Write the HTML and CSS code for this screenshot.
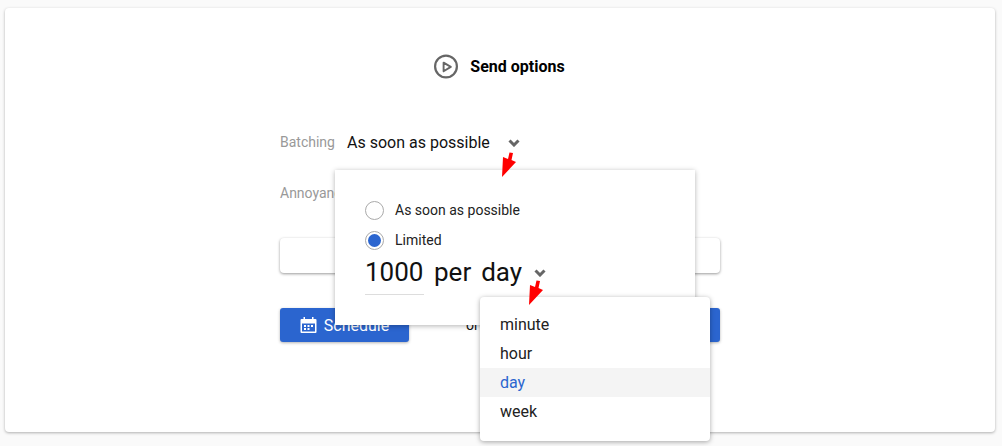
FILE: index.html
```html
<!DOCTYPE html>
<html lang="en">
  <head>
    <meta charset="UTF-8" />
    <title>Send options</title>
    <link rel="stylesheet" href="styles.css">
  </head>
  <body>
    <div class="card">
      <h2 class="title">
        <svg class="title-icon" width="26" height="26" viewBox="0 0 26 26">
          <circle cx="13" cy="13.5" r="10.9" fill="none" stroke="#666" stroke-width="2.2" />
          <path d="M10.6 9.6 L17.8 13.9 L10.6 18.2 Z" fill="none" stroke="#666" stroke-width="1.9" stroke-linejoin="round" />
        </svg>
        Send options
      </h2>

      <div class="form">
        <div class="row">
          <span class="label">Batching</span>
          <span class="value">As soon as possible</span>
          <svg class="chevron chevron-first" width="12" height="8" viewBox="0 0 12 8">
            <path d="M1.5 1.5 L6 6 L10.5 1.5" fill="none" stroke="#666" stroke-width="3" />
          </svg>
        </div>
        <div class="row row-second">
          <span class="label">Annoyance</span>
        </div>
        <div class="text-box"></div>
        <div class="actions">
          <button class="btn btn-schedule">
            <svg width="18" height="18" viewBox="0 0 18 18">
              <path d="M1.5 3 H15.5 A1 1 0 0 1 16.5 4 V16 A1 1 0 0 1 15.5 17 H1.5 A1 1 0 0 1 0.5 16 V4 A1 1 0 0 1 1.5 3 Z M2 7.5 V15.5 H15 V7.5 Z" fill="#fff" fill-rule="evenodd" />
              <path d="M3.5 1 H5 V4 H3.5 Z M12 1 H13.5 V4 H12 Z M4 9 H6 V11 H4 Z M7.5 9 H9.5 V11 H7.5 Z M11 9 H13 V11 H11 Z M4 12 H6 V14 H4 Z M7.5 12 H9.5 V14 H7.5 Z" fill="#fff" />
            </svg>
            Schedule
          </button>
          <span class="or">or</span>
          <button class="btn btn-send">Send</button>
        </div>
      </div>
    </div>

    <!-- popup over the form -->
    <div class="popup">
      <label class="radio-row">
        <span class="radio"></span>
        As soon as possible
      </label>
      <label class="radio-row">
        <span class="radio radio-on"></span>
        Limited
      </label>
      <div class="limit">
        <span class="limit-count">1000</span>
        <span>per</span>
        <span>day</span>
        <svg class="chevron" width="12" height="8" viewBox="0 0 12 8">
          <path d="M1.5 1.5 L6 6 L10.5 1.5" fill="none" stroke="#666" stroke-width="3" />
        </svg>
      </div>
    </div>

    <ul class="menu">
      <li>minute</li>
      <li>hour</li>
      <li class="active">day</li>
      <li>week</li>
    </ul>

    <!-- red arrows -->
    <svg class="arrow arrow-one" width="17" height="26" viewBox="0 0 17 26">
      <path d="M9.5 0.5 L13 1 L11.5 8 L16 10 L2 25 L3 5 L8 7 Z" fill="#ff0000" />
    </svg>
    <svg class="arrow arrow-two" width="17" height="26" viewBox="0 0 17 26">
      <path d="M9.5 0.5 L13 1 L11.5 8 L16 10 L2 25 L3 5 L8 7 Z" fill="#ff0000" />
    </svg>
  </body>
</html>
```

FILE: styles.css
```css
body {
  margin: 0;
  height: 446px;
  overflow: hidden;
  position: relative;
  padding: 8px 7px 14px 5px;
  box-sizing: border-box;
  background-color: #fafafa;
  font-family: Roboto, sans-serif;
  color: #111;
}
.card {
  height: 424px;
  background-color: white;
  border-radius: 4px;
  box-shadow: 0 1px 3px rgba(0, 0, 0, 0.3);
}
.title {
  margin: 0;
  padding: 45px 2px 0 0;
  height: 26px;
  display: flex;
  align-items: center;
  justify-content: center;
  gap: 11px;
  font-size: 16px;
  font-weight: 700;
  color: black;
}
.title-icon {
  flex: none;
}
.form {
  width: 440px;
  margin: 51px auto 0;
}
.row {
  display: flex;
  align-items: center;
  height: 24px;
}
.row-second {
  margin-top: 27px;
}
.label {
  width: 67px;
  font-size: 14px;
  color: #999;
}
.value {
  font-size: 16px;
}
.chevron {
  flex: none;
}
.chevron-first {
  margin-left: 18px;
  margin-top: 1px;
}
.text-box {
  height: 35px;
  margin-top: 33px;
  background-color: white;
  border-radius: 4px;
  box-shadow: 0 1px 3px rgba(0, 0, 0, 0.4);
}
.actions {
  display: flex;
  align-items: center;
  margin-top: 35px;
}
.btn {
  height: 34px;
  display: flex;
  align-items: center;
  justify-content: center;
  gap: 6px;
  border: none;
  border-radius: 3px;
  background-color: #2b65cf;
  color: white;
  font-family: Roboto, sans-serif;
  font-size: 16px;
  box-shadow: 0 1px 3px rgba(0, 0, 0, 0.3);
}
.btn-schedule {
  width: 129px;
}
.or {
  margin-left: 57px;
  font-size: 14px;
}
.btn-send {
  width: 130px;
  margin-left: auto;
}
.popup {
  position: absolute;
  left: 335px;
  top: 170px;
  width: 360px;
  height: 155px;
  box-sizing: border-box;
  padding: 30px 30px 0;
  background-color: white;
  box-shadow: 0 1px 5px rgba(0, 0, 0, 0.3);
}
.radio-row {
  display: flex;
  align-items: center;
  gap: 11px;
  height: 20px;
  margin-bottom: 10px;
  font-size: 14px;
  color: #222;
}
.radio {
  flex: none;
  box-sizing: border-box;
  width: 19px;
  height: 19px;
  border: 1.5px solid #aaa;
  border-radius: 50%;
  background-clip: content-box;
}
.radio-on {
  padding: 2px;
  background-color: #2b65cf;
}
.limit {
  display: flex;
  align-items: center;
  gap: 10px;
  margin-top: -11px;
  font-size: 26px;
  line-height: 34px;
}
.limit-count {
  width: 59px;
  padding-bottom: 5px;
  margin-top: 6px;
  border-bottom: 1px solid #ddd;
}
.limit .chevron {
  margin-left: 2px;
  margin-top: 1px;
}
.menu {
  position: absolute;
  left: 480px;
  top: 297px;
  width: 230px;
  height: 144px;
  box-sizing: border-box;
  margin: 0;
  padding: 13px 0 0;
  list-style: none;
  background-color: white;
  border-radius: 4px;
  box-shadow: 0 1px 5px rgba(0, 0, 0, 0.35);
}
.menu li {
  height: 29px;
  line-height: 29px;
  padding-left: 20px;
  font-size: 16px;
  color: #222;
}
.menu .active {
  color: #2b65cf;
  background-color: #f4f4f4;
}
.arrow {
  position: absolute;
}
.arrow-one {
  left: 500px;
  top: 152px;
}
.arrow-two {
  left: 527px;
  top: 280px;
}
```
